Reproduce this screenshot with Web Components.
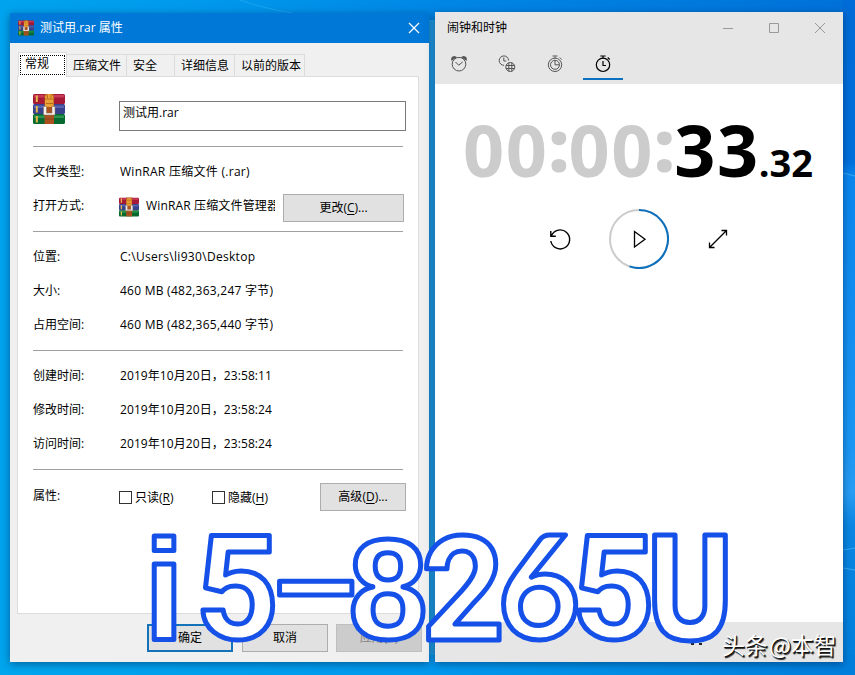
<!DOCTYPE html>
<html lang="zh-CN">
<head>
<meta charset="utf-8">
<title>桌面</title>
<style>
  html, body {
    margin: 0;
    height: 100%;
    overflow: hidden;
  }

  body {
    font: 12px/16px "Open Sans", "Noto Sans CJK SC", sans-serif;
    color: #000;
  }
</style>
</head>
<body>
<desktop-surface>
  <props-dialog heading="测试用.rar 属性">
    <props-tab slot="tabs" selected style="--w: 49px">常规</props-tab>
    <props-tab slot="tabs" style="--w: 60px; --pad: 6px">压缩文件</props-tab>
    <props-tab slot="tabs" style="--w: 48px; --pad: 6px">安全</props-tab>
    <props-tab slot="tabs" style="--w: 60px; --pad: 6px">详细信息</props-tab>
    <props-tab slot="tabs" style="--w: 70px; --pad: 6px">以前的版本</props-tab>

    <file-header>测试用.rar</file-header>
    <props-group style="--top: 8px; --h: 85px">
      <props-row label="文件类型:" style="--fit: .28px">WinRAR 压缩文件 (.rar)</props-row>
      <props-row label="打开方式:">
        <open-with>WinRAR 压缩文件管理器</open-with>
        <win-button slot="action" style="--w: 121px" key="C">更改</win-button>
      </props-row>
    </props-group>
    <props-group style="--top: 8px; --h: 119px">
      <props-row label="位置:" style="--fit: .3px">C:\Users\li930\Desktop</props-row>
      <props-row label="大小:" style="--fit: .25px">460 MB (482,363,247 字节)</props-row>
      <props-row label="占用空间:" style="--fit: .25px">460 MB (482,365,440 字节)</props-row>
    </props-group>
    <props-group style="--top: 8px; --h: 119px">
      <props-row label="创建时间:" style="--fit: .08px">2019年10月20日，23:58:11</props-row>
      <props-row label="修改时间:" style="--fit: .08px">2019年10月20日，23:58:24</props-row>
      <props-row label="访问时间:" style="--fit: .08px">2019年10月20日，23:58:24</props-row>
    </props-group>
    <props-group style="--top: 9px; --h: 60px">
      <props-row label="属性:">
        <check-field key="R">只读</check-field>
        <check-field key="H">隐藏</check-field>
        <win-button slot="action" style="--w: 86px; --drop: 2px" key="D">高级</win-button>
      </props-row>
    </props-group>

    <win-button slot="buttons" primary>确定</win-button>
    <win-button slot="buttons">取消</win-button>
    <win-button slot="buttons" disabled>应用(A)</win-button>
  </props-dialog>

  <clock-window heading="闹钟和时钟">
    <stop-watch idle="00:00:" seconds="33" fraction=".32"></stop-watch>
  </clock-window>

  <caption-banner></caption-banner>
  <water-mark>头条 @本智</water-mark>
</desktop-surface>

<script>
// Small base: every element renders a static template into its shadow root.
class BaseElement extends HTMLElement {
  constructor() {
    super();
    this.attachShadow({ mode: 'open' });
  }

  connectedCallback() {
    this.shadowRoot.innerHTML = `<style>${this.getStyles()}</style>${this.render()}`;
  }

  attr(name) {
    return this.getAttribute(name) || '';
  }

  getStyles() { return ''; }
  render() { return '<slot></slot>'; }
}

// --- Desktop ---

class DesktopSurface extends BaseElement {
  getStyles() {
    return `
      :host {
        display: block;
        position: relative;
        width: 855px;
        height: 675px;
        overflow: hidden;
        background: #0080e0;
      }
      .wallpaper { position: absolute; inset: 0; }
    `;
  }

  render() {
    return `
      <svg class="wallpaper" width="855" height="675" viewBox="0 0 855 675">
        <defs>
          <linearGradient id="base">
            <stop offset="0" stop-color="#00a4ee"/>
            <stop offset=".25" stop-color="#0098ec"/>
            <stop offset=".5" stop-color="#0088e6"/>
            <stop offset="1" stop-color="#0071d8"/>
          </linearGradient>
          <linearGradient id="side" x1="0" y1="0" x2="0" y2="1">
            <stop offset="0" stop-color="#006cd8"/>
            <stop offset=".24" stop-color="#0070dc"/>
            <stop offset=".26" stop-color="#0a86ee"/>
            <stop offset=".65" stop-color="#1a96f4"/>
            <stop offset=".73" stop-color="#289ef4"/>
            <stop offset=".78" stop-color="#0a86e4"/>
            <stop offset="1" stop-color="#0080dc"/>
          </linearGradient>
          <linearGradient id="floor">
            <stop offset="0" stop-color="#00a6ee"/>
            <stop offset=".5" stop-color="#0099ee"/>
            <stop offset=".8" stop-color="#0089e4"/>
            <stop offset="1" stop-color="#007edc"/>
          </linearGradient>
        </defs>
        <rect width="855" height="675" fill="url(#base)"/>
        <rect x="842" width="13" height="675" fill="url(#side)"/>
        <rect x="428" y="20" width="10" height="640" fill="#20a0e8"/>
        <rect y="655" width="855" height="20" fill="url(#floor)"/>
        <path d="M240 0Q262 8 292 13" fill="none" stroke="#35b4f4" opacity=".5"/>
        <path d="M843 550l12-2M843 568l12 2M843 173l12 3" stroke="#5ac0fa" opacity=".6"/>
      </svg>
      <slot></slot>
    `;
  }
}

// --- Shared controls ---

class RarIcon extends BaseElement {
  getStyles() {
    return `
      :host { display: block; width: var(--size, 16px); height: var(--size, 16px); }
      svg { display: block; width: 100%; height: 100%; }
    `;
  }

  render() {
    return `
      <svg viewBox="0 0 32 32">
        <rect y="1" width="32" height="10" rx="1.500" fill="#a51836"/>
        <path d="M1 2h30v2.500H1z" fill="#c83a55"/>
        <rect y="11" width="32" height="10" rx="1.500" fill="#38428c"/>
        <path d="M1 12.500h30v2.500H1z" fill="#5963b0"/>
        <rect y="21" width="32" height="10" rx="1.500" fill="#066a30"/>
        <path d="M1 22.500h30v2.500H1z" fill="#2c9450"/>
        <path d="M3.800 2.500v6.500M3.800 13v6.500M3.800 23v6.500" stroke="#e6b84a" stroke-width="2"/>
        <path d="M11.500 1h9.500v30h-9.500z" fill="#a9521f"/>
        <path d="M12 5q0-4 4.250-4t4.250 4v9H12z" fill="#eba234"/>
        <path d="M12 6h8.500M14.500 2v3M18 2v3M13 10.500h7" stroke="#b76920"/>
        <path d="M10.500 13.500h3v6.500h5.500v-6.500h3v8.500H10.500z" fill="#f4f1ec" stroke="#81695b" stroke-width=".5"/>
        <path d="M12 26h9" stroke="#8d431d"/>
      </svg>
    `;
  }
}

class WinButton extends BaseElement {
  getStyles() {
    return `
      :host {
        display: flex;
        align-items: center;
        justify-content: center;
        box-sizing: border-box;
        width: var(--w, 86px);
        height: 28px;
        margin-top: var(--drop, 0);
        background: #e1e1e1;
        border: 1px solid #adadad;
        white-space: nowrap;
      }
      :host([primary]) { border: 2px solid #1473b8; }
      :host([disabled]) { background: #ccc; border-color: #bfbfbf; color: #838383; }
      u { text-underline-offset: 2px; }
    `;
  }

  render() {
    const key = this.attr('key');
    return `<span><slot></slot>${key ? `(<u>${key}</u>)...` : ''}</span>`;
  }
}

class CheckField extends BaseElement {
  getStyles() {
    return `
      :host { display: flex; align-items: center; gap: 3px; width: 93px; padding-top: 3px; }
      i { box-sizing: border-box; width: 13px; height: 13px; border: 1px solid #333; background: #fff; }
      u { text-underline-offset: 2px; }
    `;
  }

  render() {
    return `<i></i><span><slot></slot>(<u>${this.attr('key')}</u>)</span>`;
  }
}

// --- Properties dialog ---

class PropsDialog extends BaseElement {
  getStyles() {
    return `
      :host {
        position: absolute;
        left: 10px;
        top: 13px;
        width: 419px;
        height: 649px;
        display: flex;
        flex-direction: column;
        background: #f0f0f0;
        box-shadow: 0 2px 8px rgba(0, 30, 70, .5);
      }
      header {
        flex: none;
        display: flex;
        align-items: center;
        height: 30px;
        padding: 0 9px 0 8px;
        background: #0078d7;
        color: #fff;
      }
      header span { flex: 1; margin-left: 6px; }
      nav {
        flex: none;
        display: flex;
        align-items: flex-end;
        height: 34px;
        margin: 0 0 -1px 8px;
        position: relative;
      }
      main {
        flex: none;
        box-sizing: border-box;
        width: 402px;
        height: 538px;
        margin-left: 7px;
        padding-left: 15px;
        background: #fff;
        border: 1px solid #dcdcdc;
      }
      footer {
        display: flex;
        justify-content: flex-end;
        gap: 9px;
        padding: 10px 7px 0 0;
      }
      footer ::slotted(:last-child) { margin-left: -1px; }
    `;
  }

  render() {
    return `
      <header>
        <rar-icon></rar-icon>
        <span>${this.attr('heading')}</span>
        <svg width="12" height="12"><path d="M1 1l10 10M11 1L1 11" stroke="#fff" stroke-width="1.200"/></svg>
      </header>
      <nav><slot name="tabs"></slot></nav>
      <main><slot></slot></main>
      <footer><slot name="buttons"></slot></footer>
    `;
  }
}

class PropsTab extends BaseElement {
  getStyles() {
    return `
      :host {
        box-sizing: border-box;
        display: block;
        width: var(--w);
        height: 23px;
        padding: 3px 0 0 var(--pad);
        border: 1px solid #dcdcdc;
        border-left: 0;
        white-space: nowrap;
      }
      :host([selected]) {
        height: 25px;
        padding: 2px 1px 3px;
        background: #fff;
        border-left: 1px solid #dcdcdc;
        border-bottom: 0;
      }
      :host([selected]) div {
        box-sizing: border-box;
        height: 20px;
        padding-left: 4px;
        line-height: 15px;
        border: 1px dotted #000;
      }
    `;
  }

  render() {
    return '<div><slot></slot></div>';
  }
}

class FileHeader extends BaseElement {
  getStyles() {
    return `
      :host { display: grid; grid-template-columns: 86px 287px; height: 69px; align-items: start; }
      rar-icon { --size: 32px; margin-top: 16px; }
      div {
        box-sizing: border-box;
        height: 30px;
        margin-top: 24px;
        padding: 3px 3px;
        border: 1px solid #7a7a7a;
      }
    `;
  }

  render() {
    return '<rar-icon></rar-icon><div><slot></slot></div>';
  }
}

class PropsGroup extends BaseElement {
  getStyles() {
    return `
      :host {
        display: block;
        height: var(--h);
        width: 373px;
      }
      hr { width: 370px; height: 1px; margin: 0 0 var(--top); border: 0; background: #a0a0a0; }
    `;
  }

  render() {
    return '<hr><slot></slot>';
  }
}

class PropsRow extends BaseElement {
  getStyles() {
    return `
      :host {
        display: grid;
        grid-template-columns: 86px 1fr auto;
        align-items: center;
        height: 34px;
      }
      .value { display: flex; padding-left: 1px; letter-spacing: var(--fit, 0); white-space: nowrap; }
      ::slotted(check-field:first-of-type) { margin-left: -1px; }
      ::slotted(win-button[style*="121px"]) { margin: 3px 2px 0 0; }
    `;
  }

  render() {
    return `
      <span>${this.attr('label')}</span>
      <div class="value"><slot></slot></div>
      <slot name="action"></slot>
    `;
  }
}

class OpenWith extends BaseElement {
  getStyles() {
    return `
      :host { display: flex; align-items: center; width: 156px; margin-left: -1px; overflow: hidden; letter-spacing: .15px; }
      rar-icon { --size: 20px; flex: none; margin: 1px 7px 0 0; }
    `;
  }

  render() {
    return '<rar-icon></rar-icon><span><slot></slot></span>';
  }
}

// --- Alarms & Clock ---

class ClockWindow extends BaseElement {
  getStyles() {
    return `
      :host {
        position: absolute;
        left: 435px;
        top: 12px;
        width: 408px;
        height: 650px;
        display: flex;
        flex-direction: column;
        background: #fff;
        box-shadow: 0 2px 8px rgba(0, 30, 70, .5);
      }
      header { flex: none; height: 72px; background: #e6e6e6; }
      .title { display: flex; align-items: center; height: 32px; padding: 0 17px 0 12px; }
      .title span { flex: 1; }
      .title svg { margin-left: 34px; }
      nav { display: flex; height: 36px; }
      nav div {
        box-sizing: border-box;
        width: 48px;
        height: 36px;
        display: flex;
        justify-content: center;
        padding-top: 11px;
      }
      nav .on { width: 40px; margin-left: 4px; border-bottom: 2px solid #0b70bd; }
      nav svg { flex: none; fill: none; stroke: #555; }
      nav .on svg { stroke: #000; }
      main { flex: 1; }
      footer { display: flex; align-items: flex-start; height: 40px; background: #e6e6e6; }
      footer svg { margin: 18px 0 0 254px; }
    `;
  }

  render() {
    return `
      <header>
        <div class="title">
          <span>${this.attr('heading')}</span>
          <svg width="12" height="12"><path d="M1 6.500h10" stroke="#999"/></svg>
          <svg width="12" height="12"><path d="M1.500 1.500h9v9h-9z" fill="none" stroke="#999"/></svg>
          <svg width="12" height="12"><path d="M1 1l10 10M11 1L1 11" stroke="#999"/></svg>
        </div>
        <nav>
          <div><svg width="18" height="18" viewBox="0 0 18 18">
            <circle cx="9" cy="9.200" r="6.800"/><path d="M5.500 7L8.700 10.200l4-3.200"/>
            <path d="M1.500 6q-1.500-4.500 3-5l2.500 1zM16.500 6q1.500-4.500-3-5l-2.500 1z" fill="#555" stroke="none"/>
          </svg></div>
          <div><svg width="18" height="18" viewBox="0 0 18 18">
            <path d="M6 10.300A4.700 4.700 0 1 1 10.600 5.500M5.800 2.500v3.500h2.500"/>
            <circle cx="12.300" cy="12" r="4.500"/><path d="M8 10.500h8.600M8 13.500h8.600M10.800 7.700v8.600M13.800 7.700v8.600"/>
          </svg></div>
          <div><svg width="18" height="18" viewBox="0 0 18 18">
            <circle cx="9" cy="9.800" r="6.700"/><circle cx="9" cy="9.800" r="4.500"/>
            <path d="M9 5.500v4.300h4M6.500 1h5M9 1.500v2M13.700 2.500l2 2"/>
          </svg></div>
          <div class="on"><svg width="18" height="18" viewBox="0 0 18 18">
            <circle cx="9" cy="9.800" r="6.700" stroke-width="1.200"/>
            <path d="M9 6v4.500h3M6.300 1h5.400M9 1.500v2M13.700 2.500l2 2" stroke-width="1.200"/>
          </svg></div>
        </nav>
      </header>
      <main><slot></slot></main>
      <footer><svg width="14" height="6"><path d="M2 4h3M10 4h3" stroke="#222" stroke-width="2"/></svg></footer>
    `;
  }
}

class StopWatch extends BaseElement {
  getStyles() {
    return `
      :host { display: block; }
      .time {
        display: flex;
        align-items: baseline;
        height: 120px;
        padding-left: 28px;
        font: bold 72px/130px "Open Sans", sans-serif;
        letter-spacing: 1.600px;
        white-space: nowrap;
      }
      .idle { color: #ccc; }
      .colon { position: relative; top: -5px; font-weight: 800; letter-spacing: -.800px; }
      .fraction { font-size: 38px; letter-spacing: 0; margin-left: -1px; }
      .controls { display: flex; align-items: center; padding: 5px 0 0 112px; }
      svg { fill: none; stroke: #000; }
      .ring { margin: 0 38px 0 36px; }
    `;
  }

  render() {
    const idle = this.attr('idle').replace(/:/g, '<span class="colon">:</span>');
    return `
      <div class="time">
        <span class="idle">${idle}</span><span>${this.attr('seconds')}</span><span class="fraction">${this.attr('fraction')}</span>
      </div>
      <div class="controls">
        <svg width="26" height="26" viewBox="0 0 26 26" stroke-width="1.400">
          <path d="M4.500 9.500A9.500 9.500 0 1 1 3.800 15M3.800 5v5.300h5"/>
        </svg>
        <svg class="ring" width="60" height="60" viewBox="0 0 60 60">
          <circle cx="30" cy="30" r="29" stroke="#ccc" stroke-width="2"/>
          <path d="M30 1A29 29 0 1 1 20.500 57.400" stroke="#0b70bd" stroke-width="2"/>
          <path d="M25.500 22.500v15.500l10.500-7.750z" stroke-width="1.300"/>
        </svg>
        <svg width="22" height="22" viewBox="0 0 22 22" stroke-width="1.300">
          <path d="M2.500 19.500L19.500 2.500M14.500 2.500h5v5M2.500 14.500v5h5"/>
        </svg>
      </div>
    `;
  }
}

// --- Overlays ---

class CaptionBanner extends BaseElement {
  getStyles() {
    return `
      :host { position: absolute; inset: 0; pointer-events: none; }
      svg { display: block; }
      text {
        font: 700 145px Roboto, sans-serif;
        text-anchor: middle;
        fill: #fff;
        stroke: #1550e8;
        stroke-width: 5px;
        stroke-linejoin: round;
      }
      .stem { font: 700 143px "Liberation Sans", sans-serif; }
      .dash { font-weight: 500; }
      .eight { font: 700 142px "Liberation Sans", sans-serif; }
      .six { font: 700 143px Lato, sans-serif; }
      .cup { font: 700 142px "DejaVu Sans Mono", monospace; }
    `;
  }

  render() {
    return `<svg width="855" height="675"><text y="639"><tspan class="stem" x="164" y="640">i</tspan><tspan x="237" y="639">5</tspan><tspan class="dash" x="315">–</tspan><tspan class="eight" x="388">8</tspan><tspan x="463" y="640">2</tspan><tspan class="six" x="539" y="639">6</tspan><tspan x="613">5</tspan><tspan class="cup" x="690">U</tspan></text></svg>`;
  }
}

class WaterMark extends BaseElement {
  getStyles() {
    return `
      :host {
        position: absolute;
        left: 722px;
        top: 629px;
        font: 400 23px/30px "Noto Sans CJK SC", sans-serif;
        letter-spacing: -.3px;
        word-spacing: -3px;
        white-space: nowrap;
        color: #fff;
        text-shadow: 1px 1px 0 #111, 1.500px 1.500px 1px #222;
      }
    `;
  }
}

customElements.define('rar-icon', RarIcon);
customElements.define('win-button', WinButton);
customElements.define('check-field', CheckField);
customElements.define('props-tab', PropsTab);
customElements.define('file-header', FileHeader);
customElements.define('props-group', PropsGroup);
customElements.define('props-row', PropsRow);
customElements.define('open-with', OpenWith);
customElements.define('props-dialog', PropsDialog);
customElements.define('stop-watch', StopWatch);
customElements.define('clock-window', ClockWindow);
customElements.define('caption-banner', CaptionBanner);
customElements.define('water-mark', WaterMark);
customElements.define('desktop-surface', DesktopSurface);
</script>
</body>
</html>
